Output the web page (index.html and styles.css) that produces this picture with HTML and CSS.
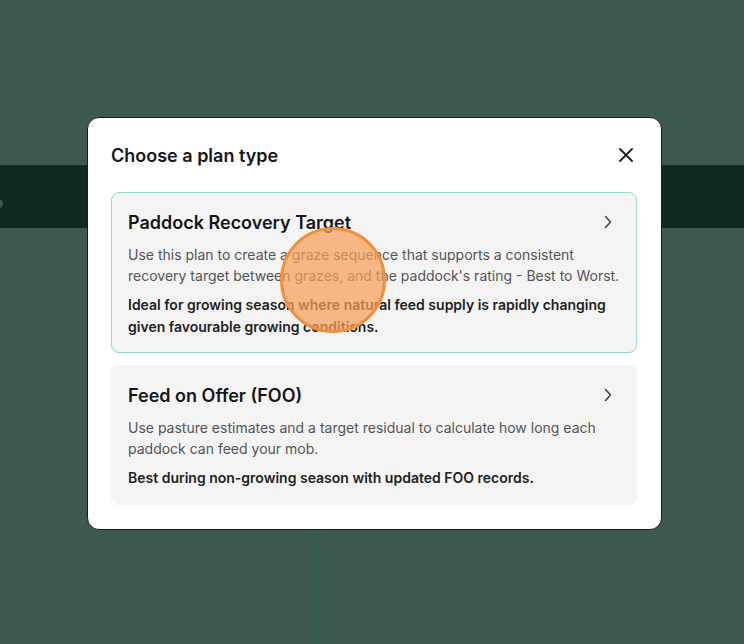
FILE: index.html
```html
<!DOCTYPE html>
<html lang="en">
<head>
  <meta charset="UTF-8" />
  <meta name="viewport" content="width=device-width, initial-scale=1.0"/>
  <title>Choose a plan type</title>
  <link rel="stylesheet" href="styles.css">
</head>
<body>
  <div class="backdrop">
    <div class="topbar"><span class="topbar-dot"></span></div>
    <div class="grid"><span class="grid-line"></span></div>
  </div>

  <div class="overlay">
    <div class="modal">
      <div class="modal-head">
        <h2>Choose a plan type</h2>
        <button type="button" class="close-btn" aria-label="Close">
          <svg width="14" height="14" viewBox="0 0 14 14"><path d="M1 1L13 13M13 1L1 13" stroke="#1c1c1c" stroke-width="1.8" stroke-linecap="round"/></svg>
        </button>
      </div>

      <div class="plan selected">
        <div class="plan-head">
          <h3>Paddock Recovery Target</h3>
          <svg class="chev" width="8" height="14" viewBox="0 0 8 14"><path d="M1.5 1.5L6.5 7L1.5 12.5" fill="none" stroke="#444" stroke-width="1.6" stroke-linecap="round" stroke-linejoin="round"/></svg>
        </div>
        <p class="desc">Use this plan to create a graze sequence that supports a consistent recovery target between grazes, and the paddock's rating - Best to Worst.</p>
        <p class="note">Ideal for growing season where natural feed supply is rapidly changing given favourable growing conditions.</p>
        <span class="cursor"></span>
      </div>

      <div class="plan">
        <div class="plan-head">
          <h3>Feed on Offer (FOO)</h3>
          <svg class="chev" width="8" height="14" viewBox="0 0 8 14"><path d="M1.5 1.5L6.5 7L1.5 12.5" fill="none" stroke="#444" stroke-width="1.6" stroke-linecap="round" stroke-linejoin="round"/></svg>
        </div>
        <p class="desc">Use pasture estimates and a target residual to calculate how long each paddock can feed your mob.</p>
        <p class="note">Best during non-growing season with updated FOO records.</p>
      </div>
    </div>
  </div>
</body>
</html>
```

FILE: styles.css
```css
body {
  margin: 0;
  padding: 0;
  width: 744px;
  height: 644px;
  overflow: hidden;
  font-family: Inter, "Noto Sans", sans-serif;
  background: #3b5951;
  position: relative;
}

.backdrop {
  display: flex;
  flex-direction: column;
  height: 100%;
  padding-top: 165px;
  box-sizing: border-box;
}

.topbar {
  height: 63px;
  background: #0e2a22;
  position: relative;
}

.topbar-dot {
  position: absolute;
  left: -6px;
  top: 34px;
  width: 9px;
  height: 9px;
  border-radius: 50%;
  background: #3d564e;
}

.grid {
  flex: 1;
  position: relative;
  background-color: #3b5951;
  background-image:
    repeating-linear-gradient(90deg, transparent 0 17px, rgba(0,0,0,0.04) 17px 18px, transparent 18px 45px),
    linear-gradient(180deg, transparent 0 63px, rgba(0,0,0,0.05) 63px 64px, transparent 64px);
}

.grid-line {
  position: absolute;
  left: 317px;
  top: 0;
  bottom: 0;
  width: 2px;
  background: #2f5f50;
}

.overlay {
  position: absolute;
  inset: 0;
  display: flex;
  align-items: flex-start;
  padding: 117px 0 0 87px;
}

.modal {
  width: 575px;
  box-sizing: border-box;
  background: #ffffff;
  border: 1px solid #1a1a1a;
  border-radius: 12px;
  padding: 24px 24px 24px 23px;
}

.modal-head {
  display: flex;
  align-items: center;
  justify-content: space-between;
  height: 26px;
  margin-bottom: 24px;
}

.modal-head h2 {
  margin: 0;
  font-size: 18px;
  font-weight: 600;
  color: #161616;
}

.close-btn {
  background: none;
  border: none;
  padding: 0;
  margin-right: 4px;
  display: flex;
  cursor: pointer;
}

.plan {
  position: relative;
  background: #f4f4f4;
  border: 1px solid #f4f4f4;
  border-radius: 8px;
  padding: 17px 16px 15px 16px;
  margin-bottom: 12px;
}

.plan:last-child {
  margin-bottom: 0;
}

.plan.selected {
  border-color: #8fdcbf;
  padding-bottom: 14px;
}

.plan-head {
  display: flex;
  align-items: center;
  justify-content: space-between;
  height: 24px;
}

.plan-head h3 {
  margin: 0;
  font-size: 18px;
  font-weight: 600;
  color: #161616;
}

.chev {
  margin-right: 8px;
}

.desc {
  margin: 10px 0 0;
  font-size: 14px;
  line-height: 21px;
  color: #555555;
}

.note {
  margin: 8px 0 0;
  font-size: 14px;
  line-height: 22px;
  font-weight: 600;
  color: #222222;
}

.cursor {
  position: absolute;
  left: 168px;
  top: 34px;
  width: 106px;
  height: 106px;
  border-radius: 50%;
  border: 3px solid #f0903a;
  background: rgba(247, 160, 90, 0.72);
  box-sizing: border-box;
}
```
